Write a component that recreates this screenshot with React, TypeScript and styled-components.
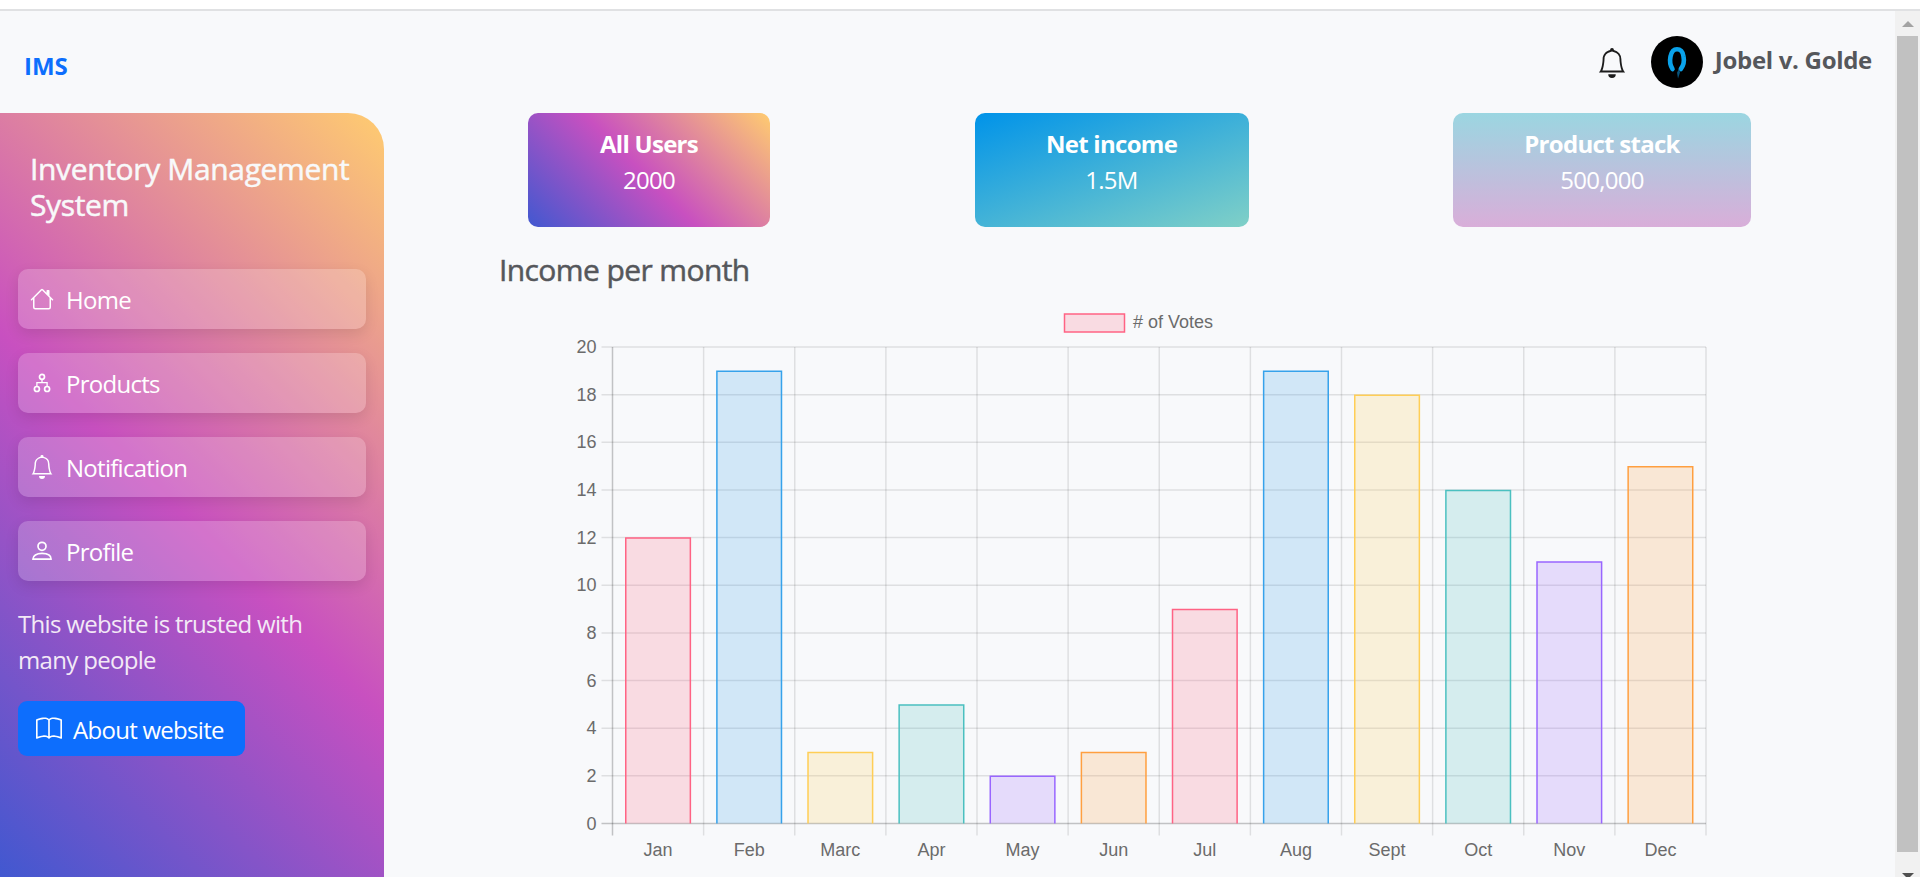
import React from 'react';
import styled, { createGlobalStyle } from 'styled-components';
import { BsHouse, BsBell, BsBook } from 'react-icons/bs';

const FONT = '"Open Sans", "Noto Sans", sans-serif';
const SUNSET = 'linear-gradient(45deg, #4158d0 0%, #c850c0 47.5%, #ffcc70 100%)';

const Global = createGlobalStyle`
  html, body { margin: 0; padding: 0; height: 100%; overflow: hidden; background: #fff; }
  #root { height: 100%; }
  * { box-sizing: border-box; }
`;

const Screen = styled.div`
  height: 877px;
  display: flex;
  flex-direction: column;
  font-family: ${FONT};
  letter-spacing: -0.72px;
  font-size: 24px;
  line-height: 36px;
`;
const TopStrip = styled.div`
  flex: 0 0 11px;
  background: #fff;
  border-bottom: 2px solid #e0e1e3;
`;
const Body = styled.div`
  flex: 1;
  min-height: 0;
  display: flex;
`;
const Page = styled.div`
  flex: 1;
  min-width: 0;
  background: #f8f9fb;
  display: flex;
  flex-direction: column;
  overflow: hidden;
`;
const Scrollbar = styled.div`
  flex: 0 0 25px;
  background: #f1f1f1;
  display: flex;
  flex-direction: column;
  padding: 0 2px;
`;
const ScrollArrow = styled.div<{ $down?: boolean }>`
  flex: 0 0 25px;
  display: flex;
  align-items: flex-start;
  justify-content: center;
  overflow: hidden;
  padding-top: ${(p) => (p.$down ? 21 : 10)}px;
  &::before {
    content: '';
    border-left: 6px solid transparent;
    border-right: 6px solid transparent;
    ${(p) => (p.$down ? 'border-top: 6px solid #505050;' : 'border-bottom: 6px solid #a3a3a3;')}
  }
`;
const ScrollThumb = styled.div`
  flex: 1;
  background: #c1c1c1;
`;
const Header = styled.header`
  flex: 0 0 102px;
  display: flex;
  align-items: flex-start;
  justify-content: space-between;
  padding: 25px 23px 0 24px;
`;
const Brand = styled.div`
  font-weight: 700;
  color: #0d6efd;
  margin-top: 12px;
  letter-spacing: 0;
`;
const UserBox = styled.div`
  display: flex;
  align-items: center;
  color: #000;
`;
const BellWrap = styled.div`
  display: flex;
  margin-right: 24px;
  margin-top: 2px;
  color: #1c1c1c;
`;
const Name = styled.div`
  font-weight: 700;
  color: #55575b;
  margin-left: 12px;
  margin-top: -5px;
  letter-spacing: -0.3px;
`;
const Layout = styled.div`
  flex: 1;
  min-height: 0;
  display: flex;
`;
const Sidebar = styled.aside`
  flex: 0 0 384px;
  background: ${SUNSET};
  border-top-right-radius: 36px;
  padding: 38px 18px 0;
  color: #fff;
`;
const Title = styled.h4`
  margin: 0 0 46px;
  padding: 0 0 0 12px;
  font-size: 30px;
  font-weight: 500;
  line-height: 36px;
  color: #f8f9fa;
  letter-spacing: -0.35px;
  -webkit-text-stroke: 0.5px currentColor;
`;
const NavItem = styled.div`
  height: 60px;
  margin-bottom: 24px;
  padding-top: 2px;
  background: rgba(255, 255, 255, 0.2);
  border-radius: 10px;
  box-shadow: 0 5px 14px rgba(0, 0, 0, 0.1);
  display: flex;
  align-items: center;
  color: #fff;
`;
const NavIcon = styled.span`
  flex: 0 0 48px;
  display: flex;
  justify-content: center;
  margin-top: -2px;
`;
const Trust = styled.p`
  margin: 0 0 23px;
  padding-top: 1px;
  max-width: 300px;
  color: #f3e9f6;
  letter-spacing: -0.68px;
`;
const AboutButton = styled.button`
  display: flex;
  align-items: center;
  height: 55px;
  width: 227px;
  padding: 2px 0 0 18px;
  border: 0;
  border-radius: 9px;
  background: #0d6efd;
  color: #fff;
  font: inherit;
  letter-spacing: inherit;
`;
const AboutIcon = styled.span`
  display: flex;
  margin-right: 11px;
  margin-top: -2px;
`;
const Main = styled.main`
  flex: 1;
  min-width: 0;
  display: flex;
  flex-direction: column;
`;
const Cards = styled.div`
  display: flex;
  gap: 204.5px;
  padding-left: 144px;
`;
const Card = styled.div<{ $w: number; $bg: string }>`
  width: ${(p) => p.$w}px;
  height: 114px;
  padding-top: 13px;
  border-radius: 10px;
  background: ${(p) => p.$bg};
  color: #fff;
  text-align: center;
`;
const CardTitle = styled.div`
  font-weight: 700;
`;
const ChartTitle = styled.h4`
  margin: 25px 0 0 115px;
  font-size: 30px;
  line-height: 36px;
  font-weight: 500;
  color: #55575b;
  letter-spacing: -0.6px;
  -webkit-text-stroke: 0.5px currentColor;
`;
const ChartSvg = styled.svg`
  display: block;
  flex: none;
  font-family: 'Liberation Sans', Arial, sans-serif;
  letter-spacing: 0;
  font-size: 18px;
`;

const Diagram = () => (
  <svg width="24" height="24" viewBox="0 0 24 24" fill="none" stroke="#fff" strokeWidth="1.7">
    <circle cx="12" cy="5.8" r="2.5" />
    <circle cx="6.9" cy="18" r="2.5" />
    <circle cx="17.100" cy="18" r="2.5" />
    <path d="M12 8.300v3.400M6.900 15.500v-3.800h10.200v3.800" strokeWidth="1.3" />
  </svg>
);
const Person = () => (
  <svg width="24" height="24" viewBox="0 0 24 24" fill="none" stroke="#fff" strokeWidth="1.7">
    <circle cx="12" cy="7.300" r="4" />
    <path d="M2.900 20.200c0-3.600 3.600-5.800 9.100-5.800s9.100 2.200 9.100 5.800z" strokeLinejoin="round" />
  </svg>
);
const Avatar = () => (
  <svg width="52" height="52" viewBox="0 0 52 52">
    <circle cx="26" cy="26" r="26" fill="#000" />
    <path
      d="M21.500 33C18.500 28.500 18.800 24 19.500 20.500C20.500 15.500 23 13.200 26 13.200C29 13.200 32 15.500 32.500 20.500C33.200 24 33 29 29.800 33"
      fill="none"
      stroke="#0aa2ea"
      strokeWidth="4.6"
      strokeLinecap="round"
    />
    <path d="M28 33l-2 3.500 1 6 2-6z" fill="#07537c" />
  </svg>
);

const labels = ['Jan', 'Feb', 'Marc', 'Apr', 'May', 'Jun', 'Jul', 'Aug', 'Sept', 'Oct', 'Nov', 'Dec'];
const votes = [12, 19, 3, 5, 2, 3, 9, 19, 18, 14, 11, 15];
const palette = ['255,99,132', '54,162,235', '255,206,86', '75,192,192', '153,102,255', '255,159,64'];

// The chart canvas starts at (384, 288) on the screen.
const ORIGIN_X = 384;
const ORIGIN_Y = 288;
const left = 612.5 - ORIGIN_X;
const right = 1706 - ORIGIN_X;
const top = 347 - ORIGIN_Y;
const base = 823.5 - ORIGIN_Y;
const step = (right - left) / 12;
const unit = (base - top) / 20;

const Chart = () => (
  <ChartSvg width="1511" height="589" viewBox="0 0 1511 589">
    <rect x={1064.5 - ORIGIN_X} y={314 - ORIGIN_Y} width="60" height="18" fill="rgba(255,99,132,.2)" stroke="rgb(255,99,132)" strokeWidth="1.5" />
    <text x={1133 - ORIGIN_X} y={328 - ORIGIN_Y} fill="#6b6b6b">
      # of Votes
    </text>
    {Array.from({ length: 11 }, (_, i) => {
      const y = base - i * 2 * unit;
      return (
        <g key={i}>
          <line x1={left - 11} x2={right} y1={y} y2={y} stroke={i === 0 ? 'rgba(0,0,0,.22)' : 'rgba(0,0,0,.1)'} strokeWidth="1.5" />
          <text x={left - 16} y={y + 6} textAnchor="end" fill="#6b6b6b">
            {i * 2}
          </text>
        </g>
      );
    })}
    {Array.from({ length: 13 }, (_, i) => {
      const x = left + i * step;
      return <line key={i} x1={x} x2={x} y1={top} y2={base + 12} stroke={i === 0 ? 'rgba(0,0,0,.22)' : 'rgba(0,0,0,.1)'} strokeWidth="1.5" />;
    })}
    {votes.map((v, i) => {
      const c = palette[i % 6];
      const w = 64.6;
      const x = left + i * step + (step - w) / 2;
      const y = base - v * unit + 0.5;
      return (
        <g key={labels[i]}>
          <rect x={x} y={y} width={w} height={base - y} fill={`rgba(${c},.2)`} />
          <path d={`M${x} ${base}V${y}H${x + w}V${base}`} fill="none" stroke={`rgb(${c})`} strokeWidth="1.5" />
          <text x={x + w / 2} y={base + 32} textAnchor="middle" fill="#6b6b6b">
            {labels[i]}
          </text>
        </g>
      );
    })}
  </ChartSvg>
);

const nav = [
  { label: 'Home', icon: <BsHouse size={24} /> },
  { label: 'Products', icon: <Diagram /> },
  { label: 'Notification', icon: <BsBell size={24} /> },
  { label: 'Profile', icon: <Person /> },
];

export default function App() {
  return (
    <Screen>
      <Global />
      <TopStrip />
      <Body>
        <Page>
          <Header>
            <Brand>IMS</Brand>
            <UserBox>
              <BellWrap>
                <BsBell size={30} />
              </BellWrap>
              <Avatar />
              <Name>Jobel v. Golde</Name>
            </UserBox>
          </Header>
          <Layout>
            <Sidebar>
              <Title>Inventory Management System</Title>
              {nav.map((n) => (
                <NavItem key={n.label}>
                  <NavIcon>{n.icon}</NavIcon>
                  {n.label}
                </NavItem>
              ))}
              <Trust>This website is trusted with many people</Trust>
              <AboutButton>
                <AboutIcon>
                  <BsBook size={26} />
                </AboutIcon>
                About website
              </AboutButton>
            </Sidebar>
            <Main>
              <Cards>
                <Card $w={242} $bg={SUNSET}>
                  <CardTitle>All Users</CardTitle>
                  2000
                </Card>
                <Card $w={274} $bg="linear-gradient(160deg, #0093e9 0%, #80d0c7 100%)">
                  <CardTitle>Net income</CardTitle>
                  1.5M
                </Card>
                <Card $w={298} $bg="linear-gradient(180deg, #9bd6e1 0%, #d9aed9 100%)">
                  <CardTitle>Product stack</CardTitle>
                  500,000
                </Card>
              </Cards>
              <ChartTitle>Income per month</ChartTitle>
              <Chart />
            </Main>
          </Layout>
        </Page>
        <Scrollbar>
          <ScrollArrow />
          <ScrollThumb />
          <ScrollArrow $down />
        </Scrollbar>
      </Body>
    </Screen>
  );
}
